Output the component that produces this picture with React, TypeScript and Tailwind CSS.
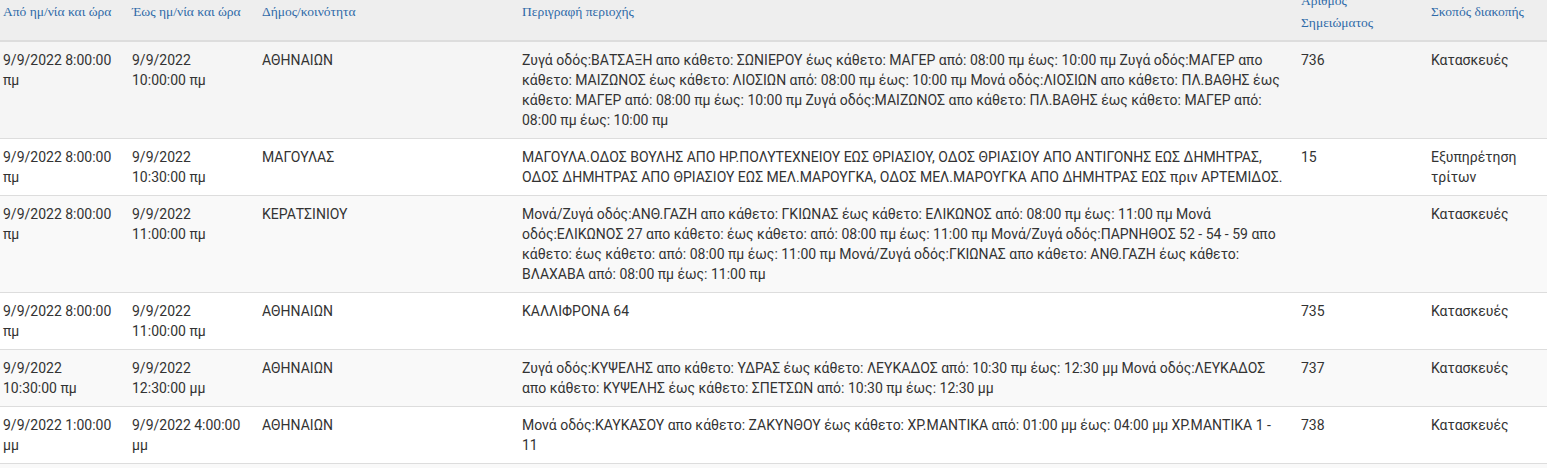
import React from 'react';

interface Closure {
    from: string;
    to: string;
    municipality: string;
    description: string;
    note: string;
    purpose: string;
}

const closures: Closure[] = [
    {
        from: '9/9/2022 8:00:00 πμ',
        to: '9/9/2022 10:00:00 πμ',
        municipality: 'ΑΘΗΝΑΙΩΝ',
        description:
            'Ζυγά οδός:ΒΑΤΣΑΞΗ απο κάθετο: ΣΩΝΙΕΡΟΥ έως κάθετο: ΜΑΓΕΡ από: 08:00 πμ έως: 10:00 πμ Ζυγά οδός:ΜΑΓΕΡ απο κάθετο: ΜΑΙΖΩΝΟΣ έως κάθετο: ΛΙΟΣΙΩΝ από: 08:00 πμ έως: 10:00 πμ Μονά οδός:ΛΙΟΣΙΩΝ απο κάθετο: ΠΛ.ΒΑΘΗΣ έως κάθετο: ΜΑΓΕΡ από: 08:00 πμ έως: 10:00 πμ Ζυγά οδός:ΜΑΙΖΩΝΟΣ απο κάθετο: ΠΛ.ΒΑΘΗΣ έως κάθετο: ΜΑΓΕΡ από: 08:00 πμ έως: 10:00 πμ',
        note: '736',
        purpose: 'Κατασκευές',
    },
    {
        from: '9/9/2022 8:00:00 πμ',
        to: '9/9/2022 10:30:00 πμ',
        municipality: 'ΜΑΓΟΥΛΑΣ',
        description:
            'ΜΑΓΟΥΛΑ.ΟΔΟΣ ΒΟΥΛΗΣ ΑΠΟ ΗΡ.ΠΟΛΥΤΕΧΝΕΙΟΥ ΕΩΣ ΘΡΙΑΣΙΟΥ, ΟΔΟΣ ΘΡΙΑΣΙΟΥ ΑΠΟ ΑΝΤΙΓΟΝΗΣ ΕΩΣ ΔΗΜΗΤΡΑΣ, ΟΔΟΣ ΔΗΜΗΤΡΑΣ ΑΠΟ ΘΡΙΑΣΙΟΥ ΕΩΣ ΜΕΛ.ΜΑΡΟΥΓΚΑ, ΟΔΟΣ ΜΕΛ.ΜΑΡΟΥΓΚΑ ΑΠΟ ΔΗΜΗΤΡΑΣ ΕΩΣ πριν ΑΡΤΕΜΙΔΟΣ.',
        note: '15',
        purpose: 'Εξυπηρέτηση τρίτων',
    },
    {
        from: '9/9/2022 8:00:00 πμ',
        to: '9/9/2022 11:00:00 πμ',
        municipality: 'ΚΕΡΑΤΣΙΝΙΟΥ',
        description:
            'Μονά/Ζυγά οδός:ΑΝΘ.ΓΑΖΗ απο κάθετο: ΓΚΙΩΝΑΣ έως κάθετο: ΕΛΙΚΩΝΟΣ από: 08:00 πμ έως: 11:00 πμ Μονά οδός:ΕΛΙΚΩΝΟΣ 27 απο κάθετο: έως κάθετο: από: 08:00 πμ έως: 11:00 πμ Μονά/Ζυγά οδός:ΠΑΡΝΗΘΟΣ 52 - 54 - 59 απο κάθετο: έως κάθετο: από: 08:00 πμ έως: 11:00 πμ Μονά/Ζυγά οδός:ΓΚΙΩΝΑΣ απο κάθετο: ΑΝΘ.ΓΑΖΗ έως κάθετο: ΒΛΑΧΑΒΑ από: 08:00 πμ έως: 11:00 πμ',
        note: '',
        purpose: 'Κατασκευές',
    },
    {
        from: '9/9/2022 8:00:00 πμ',
        to: '9/9/2022 11:00:00 πμ',
        municipality: 'ΑΘΗΝΑΙΩΝ',
        description: 'ΚΑΛΛΙΦΡΟΝΑ 64',
        note: '735',
        purpose: 'Κατασκευές',
    },
    {
        from: '9/9/2022 10:30:00 πμ',
        to: '9/9/2022 12:30:00 μμ',
        municipality: 'ΑΘΗΝΑΙΩΝ',
        description:
            'Ζυγά οδός:ΚΥΨΕΛΗΣ απο κάθετο: ΥΔΡΑΣ έως κάθετο: ΛΕΥΚΑΔΟΣ από: 10:30 πμ έως: 12:30 μμ Μονά οδός:ΛΕΥΚΑΔΟΣ απο κάθετο: ΚΥΨΕΛΗΣ έως κάθετο: ΣΠΕΤΣΩΝ από: 10:30 πμ έως: 12:30 μμ',
        note: '737',
        purpose: 'Κατασκευές',
    },
    {
        from: '9/9/2022 1:00:00 μμ',
        to: '9/9/2022 4:00:00 μμ',
        municipality: 'ΑΘΗΝΑΙΩΝ',
        description:
            'Μονά οδός:ΚΑΥΚΑΣΟΥ απο κάθετο: ΖΑΚΥΝΘΟΥ έως κάθετο: ΧΡ.ΜΑΝΤΙΚΑ από: 01:00 μμ έως: 04:00 μμ ΧΡ.ΜΑΝΤΙΚΑ 1 - 11',
        note: '738',
        purpose: 'Κατασκευές',
    },
];

const rowBg = ['bg-[#f5f5f5]', 'bg-white', 'bg-[#f9f9f9]', 'bg-white', 'bg-[#f9f9f9]', 'bg-white'];

const headers = [
    'Από ημ/νία και ώρα',
    'Έως ημ/νία και ώρα',
    'Δήμος/κοινότητα',
    'Περιγραφή περιοχής',
    'Αριθμός Σημειώματος',
    'Σκοπός διακοπής',
];

export default function App() {
    return (
        <div className="h-[468px] w-[1547px] overflow-hidden bg-white font-['Roboto',sans-serif] text-[14px] leading-[20px] text-[#333]">
            {/* table is scrolled a little, so the header's top is cut off */}
            <table className="-mt-4 w-full table-fixed border-collapse">
                <colgroup>
                    <col className="w-[124px]" />
                    <col className="w-[130px]" />
                    <col className="w-[260px]" />
                    <col className="w-[779px]" />
                    <col className="w-[130px]" />
                    <col />
                </colgroup>
                <thead>
                    <tr className="bg-[#eee]">
                        {headers.map((h, i) => (
                            <th
                                key={h}
                                className={`border-b-2 border-[#ddd] py-[6px] pr-2 text-left align-middle font-['Liberation_Serif',serif] text-[13.5px] leading-[22px] font-normal text-[#2f6aa8] ${i === 0 ? 'pl-[3px]' : 'pl-2'}`}
                            >
                                {h}
                            </th>
                        ))}
                    </tr>
                </thead>
                <tbody>
                    {closures.map((c, i) => (
                        <tr key={i} className={rowBg[i]}>
                            <td className="border-t border-[#ddd] py-2 pl-[3px] pr-2 align-top">{c.from}</td>
                            <td className="border-t border-[#ddd] p-2 align-top">{c.to}</td>
                            <td className="border-t border-[#ddd] p-2 align-top">{c.municipality}</td>
                            <td className="border-t border-[#ddd] p-2 align-top">{c.description}</td>
                            <td className="border-t border-[#ddd] p-2 align-top">{c.note}</td>
                            <td className="border-t border-[#ddd] p-2 align-top">{c.purpose}</td>
                        </tr>
                    ))}
                    <tr className="bg-[#f9f9f9]">
                        <td colSpan={6} className="h-14 border-t border-[#ddd] p-2"></td>
                    </tr>
                </tbody>
            </table>
        </div>
    );
}
